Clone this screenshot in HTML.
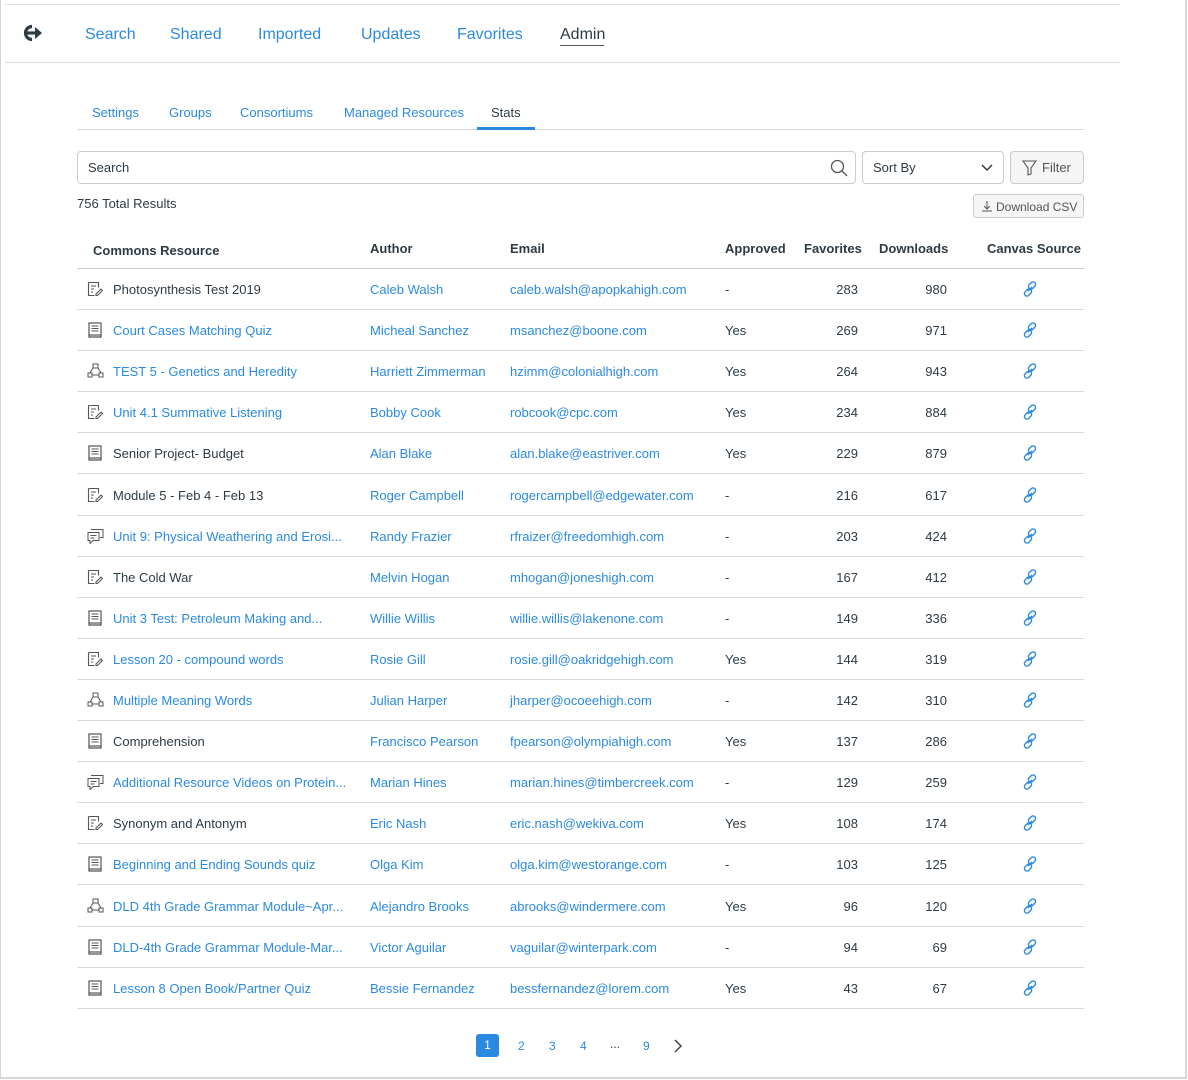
<!DOCTYPE html>
<html><head><meta charset="utf-8">
<style>
*{box-sizing:border-box;margin:0;padding:0}
body{width:1188px;height:1080px;background:#fff;font-family:"Liberation Sans",sans-serif;color:#2d3b45;position:relative;overflow:hidden}
.frame{position:absolute;left:0;top:0;width:1187px;height:1079px;border-left:1px solid #d6d6d6;border-right:2px solid #d6d6d6;border-bottom:2px solid #d6d6d6}
.a{position:absolute;white-space:nowrap}
.blue{color:#2a8ae0}
.nav{font-size:16px;top:26px}
.sub{font-size:13px;top:105px}
.hline{position:absolute;height:1px;background:#d5dadf}
.row{position:absolute;left:77px;width:1007px;height:41px;border-bottom:1px solid #d5dadf;font-size:13px}
.row span{position:absolute;top:13px;white-space:nowrap}
.row svg{position:absolute}
.th{font-size:13px;top:241px;font-weight:bold;color:#2d3b45}
</style></head><body>
<div class="frame"></div>
<div class="hline" style="left:5px;top:4px;width:1115px;background:#e2e2e2"></div>
<div class="hline" style="left:5px;top:62px;width:1115px;background:#dcdcdc"></div>
<svg class="a" style="left:20px;top:23px" width="26" height="20" viewBox="0 0 26 20"><path d="M12 3.5A6.5 6.5 0 1 0 12 16.5" fill="none" stroke="#2d3b45" stroke-width="3.2"/><path d="M7 10h9" stroke="#2d3b45" stroke-width="3.2"/><path d="M15 4l7 6-7 6z" fill="#2d3b45"/></svg>
<div class="a nav blue" style="left:85px">Search</div>
<div class="a nav blue" style="left:170px">Shared</div>
<div class="a nav blue" style="left:258px">Imported</div>
<div class="a nav blue" style="left:361px">Updates</div>
<div class="a nav blue" style="left:457px">Favorites</div>
<div class="a nav" style="left:560px">Admin</div>
<div class="hline" style="left:560px;top:45px;width:44px;background:#555"></div>
<div class="a sub blue" style="left:92px">Settings</div>
<div class="a sub blue" style="left:169px">Groups</div>
<div class="a sub blue" style="left:240px">Consortiums</div>
<div class="a sub blue" style="left:344px">Managed Resources</div>
<div class="a sub" style="left:491px">Stats</div>
<div class="hline" style="left:77px;top:129px;width:1007px"></div>
<div class="hline" style="left:477px;top:127px;width:58px;height:3px;background:#2a8ae0"></div>
<div class="a" style="left:77px;top:151px;width:779px;height:33px;border:1px solid #c7cdd1;border-radius:4px"><span class="a" style="left:10px;top:8px;font-size:13px">Search</span>
<svg class="a" style="left:752px;top:7px" width="18" height="18" viewBox="0 0 18 18"><circle cx="7.5" cy="7.5" r="6" fill="none" stroke="#555" stroke-width="1.3"/><path d="M12 12l5 5" stroke="#555" stroke-width="1.3"/></svg></div>
<div class="a" style="left:862px;top:151px;width:142px;height:33px;border:1px solid #c7cdd1;border-radius:4px"><span class="a" style="left:10px;top:8px;font-size:13px">Sort By</span>
<svg class="a" style="left:118px;top:11px" width="12" height="10" viewBox="0 0 12 10"><path d="M1 2l5 5 5-5" fill="none" stroke="#333" stroke-width="1.4"/></svg></div>
<div class="a" style="left:1010px;top:151px;width:74px;height:33px;border:1px solid #c7cdd1;border-radius:4px;background:#f5f5f5"><svg class="a" style="left:11px;top:8px" width="15" height="16" viewBox="0 0 15 16"><path d="M1 1h13L9 8v6l-3 1V8z" fill="none" stroke="#555" stroke-width="1.1"/></svg><span class="a" style="left:31px;top:8px;font-size:13px;color:#555">Filter</span></div>
<div class="a" style="left:77px;top:196px;font-size:13px">756 Total Results</div>
<div class="a" style="left:973px;top:194px;width:111px;height:24px;border:1px solid #c7cdd1;border-radius:3px;background:#f5f5f5"><svg class="a" style="left:7px;top:5px" width="12" height="13" viewBox="0 0 12 13"><path d="M6 1v8M3 6l3 3 3-3M1 11h10" fill="none" stroke="#555" stroke-width="1"/></svg><span class="a" style="left:22px;top:5px;font-size:12px;color:#555">Download CSV</span></div>
<div class="a th" style="left:93px;top:243px">Commons Resource</div>
<div class="a th" style="left:370px">Author</div>
<div class="a th" style="left:510px">Email</div>
<div class="a th" style="left:725px">Approved</div>
<div class="a th" style="left:804px">Favorites</div>
<div class="a th" style="left:879px">Downloads</div>
<div class="a th" style="left:987px">Canvas Source</div>
<div class="hline" style="left:77px;top:268px;width:1007px;background:#c7cdd1"></div>
<div id="rows"></div>
<div class="a" style="left:476px;top:1034px;width:23px;height:23px;background:#2a8ae0;border-radius:3px;color:#fff;font-size:12px;text-align:center;line-height:23px">1</div>
<div class="a blue" style="left:518px;top:1039px;font-size:12px">2</div>
<div class="a blue" style="left:549px;top:1039px;font-size:12px">3</div>
<div class="a blue" style="left:580px;top:1039px;font-size:12px">4</div>
<div class="a" style="left:610px;top:1037px;font-size:12px">...</div>
<div class="a blue" style="left:643px;top:1039px;font-size:12px">9</div>
<svg class="a" style="left:673px;top:1039px" width="10" height="14" viewBox="0 0 10 14"><path d="M2 1l6 6-6 6" fill="none" stroke="#444" stroke-width="1.5"/></svg>
<script>
const I={
q:'<svg width="16" height="16" viewBox="0 0 16 16" style="left:10px;top:12px"><path d="M1.5 1.5h10v5M1.5 1.5v13h6" fill="none" stroke="#555" stroke-width="1.1"/><path d="M4 5h5M4 8h3M4 11h2" stroke="#555"/><path d="M9 13l5-5 1.5 1.5-5 5H9z" fill="none" stroke="#555" stroke-width="1.1"/></svg>',
b:'<svg width="16" height="16" viewBox="0 0 16 16" style="left:10px;top:12px"><rect x="2" y="1" width="12" height="12" fill="none" stroke="#555" stroke-width="1.2"/><path d="M4.5 4h7M4.5 6.5h7M4.5 9h7" stroke="#555"/><path d="M2 13v2h12v-2" fill="none" stroke="#555" stroke-width="1.2"/></svg>',
n:'<svg width="17" height="16" viewBox="0 0 17 16" style="left:10px;top:12px"><rect x="6" y="1" width="5" height="4" fill="none" stroke="#555"/><rect x="1" y="10" width="4" height="4" fill="none" stroke="#555"/><rect x="12" y="10" width="4" height="4" fill="none" stroke="#555"/><path d="M6 5L3 10M11 5l3 5M5 12h7" stroke="#555"/></svg>',
d:'<svg width="17" height="16" viewBox="0 0 17 16" style="left:10px;top:12px"><path d="M4 1.5h12v8h-3" fill="none" stroke="#555"/><path d="M1 4.5h11v8H6l-3 3v-3H1z" fill="none" stroke="#555"/><path d="M3.5 7.5h6M3.5 10h4" stroke="#555"/></svg>'};
const link='<svg width="18" height="18" viewBox="0 0 18 18" style="left:944px;top:11px"><g fill="none" stroke="#2a8ae0" stroke-width="1.4"><rect x="8.5" y="1.5" width="5" height="8" rx="2.5" transform="rotate(45 11 5.5)"/><rect x="4.5" y="8.5" width="5" height="8" rx="2.5" transform="rotate(45 7 12.5)"/><path d="M7 11l4-4"/></g></svg>';
const R=[
['q','Photosynthesis Test 2019',0,'Caleb Walsh','caleb.walsh@apopkahigh.com','-',283,980],
['b','Court Cases Matching Quiz',1,'Micheal Sanchez','msanchez@boone.com','Yes',269,971],
['n','TEST 5 - Genetics and Heredity',1,'Harriett Zimmerman','hzimm@colonialhigh.com','Yes',264,943],
['q','Unit 4.1 Summative Listening',1,'Bobby Cook','robcook@cpc.com','Yes',234,884],
['b','Senior Project- Budget',0,'Alan Blake','alan.blake@eastriver.com','Yes',229,879],
['q','Module 5 - Feb 4 - Feb 13',0,'Roger Campbell','rogercampbell@edgewater.com','-',216,617],
['d','Unit 9: Physical Weathering and Erosi...',1,'Randy Frazier','rfraizer@freedomhigh.com','-',203,424],
['q','The Cold War',0,'Melvin Hogan','mhogan@joneshigh.com','-',167,412],
['b','Unit 3 Test: Petroleum Making and...',1,'Willie Willis','willie.willis@lakenone.com','-',149,336],
['q','Lesson 20 - compound words',1,'Rosie Gill','rosie.gill@oakridgehigh.com','Yes',144,319],
['n','Multiple Meaning Words',1,'Julian Harper','jharper@ocoeehigh.com','-',142,310],
['b','Comprehension',0,'Francisco Pearson','fpearson@olympiahigh.com','Yes',137,286],
['d','Additional Resource Videos on Protein...',1,'Marian Hines','marian.hines@timbercreek.com','-',129,259],
['q','Synonym and Antonym',0,'Eric Nash','eric.nash@wekiva.com','Yes',108,174],
['b','Beginning and Ending Sounds quiz',1,'Olga Kim','olga.kim@westorange.com','-',103,125],
['n','DLD 4th Grade Grammar Module~Apr...',1,'Alejandro Brooks','abrooks@windermere.com','Yes',96,120],
['b','DLD-4th Grade Grammar Module-Mar...',1,'Victor Aguilar','vaguilar@winterpark.com','-',94,69],
['b','Lesson 8 Open Book/Partner Quiz',1,'Bessie Fernandez','bessfernandez@lorem.com','Yes',43,67]];
let h='';R.forEach((r,i)=>{const t=269+i*41.1;
h+=`<div class="row" style="top:${t}px">${I[r[0]]}<span style="left:36px" class="${r[2]?'blue':''}">${r[1]}</span><span class="blue" style="left:293px">${r[3]}</span><span class="blue" style="left:433px">${r[4]}</span><span style="left:648px">${r[5]}</span><span style="right:226px">${r[6]}</span><span style="right:137px">${r[7]}</span>${link}</div>`});
document.getElementById('rows').innerHTML=h;
</script>
</body></html>
